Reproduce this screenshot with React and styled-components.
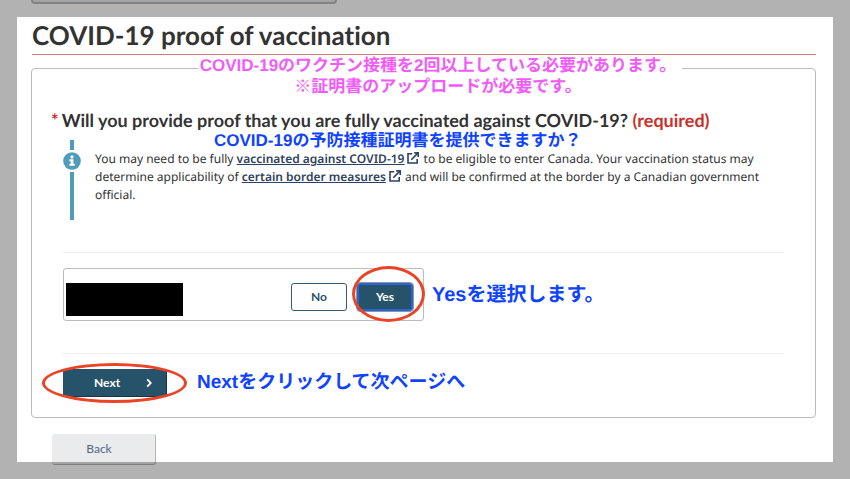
import React from "react";
import styled, { createGlobalStyle, css } from "styled-components";

export default function App() {
  return (
    <Page>
      <GlobalStyle />
      <PreviousPanel />
      <Title>COVID-19 proof of vaccination</Title>

      <Panel>
        <TopNote>
          COVID-19のワクチン接種を2回以上している必要があります。
          <br />
          ※証明書のアップロードが必要です。
        </TopNote>

        <Question id="question">
          <Star>*</Star>
          Will you provide proof that you are fully vaccinated against COVID-19?{" "}
          <Required>(required)</Required>
          <QuestionNote>
            COVID-19の予防接種証明書を提供できますか？
          </QuestionNote>
        </Question>

        <Callout>
          <Rail>
            <RailBar $size="10px" />
            <InfoIcon />
            <RailBar />
          </Rail>
          <CalloutText>
            You may need to be fully{" "}
            <Link href="#vaccinated">vaccinated against COVID-19</Link>
            <ExternalIcon /> to be eligible to enter Canada. Your vaccination
            status may determine applicability of{" "}
            <Link href="#measures">certain border measures</Link>
            <ExternalIcon /> and will be confirmed at the border by a Canadian
            government official.
          </CalloutText>
        </Callout>

        <Divider />

        <Row>
          <Traveller role="group" aria-labelledby="question">
            <HiddenName />
            <ChoiceButton type="button">No</ChoiceButton>
            <Marked>
              <ChoiceButton type="button" $selected aria-pressed="true">
                Yes
              </ChoiceButton>
              <Ring $x="-5px" $y="-17px" $bottom="-11px" $right="-12px" />
            </Marked>
          </Traveller>
          <Note $size="20px">Yesを選択します。</Note>
        </Row>

        <Divider />

        <Row>
          <Marked>
            <NextButton type="button">
              Next
              <Chevron />
            </NextButton>
            <Ring $x="-21px" $y="-6px" $bottom="-6px" $right="-20px" />
          </Marked>
          <Note $size="19px" $gap="30px">
            Nextをクリックして次ページへ
          </Note>
        </Row>
      </Panel>

      <BackButton type="button">Back</BackButton>
      <Spotlight />
    </Page>
  );
}

const InfoIcon = () => (
  <InfoSvg viewBox="0 0 18 18" aria-hidden="true">
    <circle cx="9" cy="9" r="8.8" fill="#4d9cb9" />
    <circle cx="9" cy="4.9" r="1.6" fill="#fff" />
    <path
      d="M6.4 7.3h4v4.5h1.3v2H6.4v-2h1.3V9.3H6.4z"
      fill="#fff"
    />
  </InfoSvg>
);

const ExternalIcon = () => (
  <ExternalSvg viewBox="0 0 12 12" aria-hidden="true">
    <path d="M5.2 1.8H1v9.2h9.2V7" />
    <path d="M4.3 7.8L10.6 1.4" />
    <path d="M7.2.9h4v4" />
  </ExternalSvg>
);

const Chevron = () => (
  <ChevronSvg viewBox="0 0 6 10" aria-hidden="true">
    <path d="M1.2 1.4L4.8 5L1.2 8.6" />
  </ChevronSvg>
);

const GlobalStyle = createGlobalStyle`
  * {
    box-sizing: border-box;
  }

  body {
    margin: 0;
    background: #fff;
    color: #333;
    font-family: "Noto Sans", sans-serif;
    font-variant-ligatures: none;
    text-rendering: geometricPrecision;
  }
`;

const Page = styled.main`
  display: flex;
  flex-direction: column;
  padding: 0 34px 14px 31px;
`;

const PreviousPanel = styled.div`
  width: 39%;
  height: 4px;
  background: #eaebed;
  border: 2px solid #bbb;
  border-top: 0;
  border-radius: 0 0 4px 4px;
`;

const Title = styled.h1`
  margin: 13px 0 0 1px;
  padding-bottom: 1px;
  border-bottom: 1px solid #d0797d;
  font-family: Lato, sans-serif;
  font-size: 26px;
  font-weight: bold;
  line-height: 36px;
`;

const Panel = styled.section`
  position: relative;
  margin-top: 13px;
  padding: 39px 31px 20px;
  border: 1px solid #bbb;
  border-radius: 4px;
`;

const noteText = css`
  font-family: "Liberation Sans", "Noto Sans CJK JP", sans-serif;
  font-weight: bold;
  white-space: nowrap;
`;

const TopNote = styled.p`
  ${noteText}
  position: absolute;
  top: -14px;
  left: 166px;
  width: 484px;
  margin: 0;
  padding-right: 4px;
  background: rgba(255, 255, 255, 0.96);
  color: #f05cf8;
  font-size: 17px;
  line-height: 21px;
  text-align: center;
`;

const Question = styled.h2`
  position: relative;
  margin: 0 0 0 -12px;
  font-family: Lato, sans-serif;
  font-size: 18px;
  font-weight: bold;
  line-height: 24px;
`;

const Star = styled.span`
  margin-right: 3px;
  color: #c9302c;
`;

const Required = styled.span`
  color: #c9302c;
`;

const QuestionNote = styled.span`
  ${noteText}
  position: absolute;
  top: 22px;
  left: 163px;
  color: #0f43ff;
  font-size: 17px;
  line-height: 22px;
`;

const Callout = styled.div`
  display: flex;
  gap: 14px;
  margin-top: 8px;
  min-height: 80px;
`;

const Rail = styled.div`
  display: flex;
  flex-direction: column;
  align-items: center;
  gap: 2px;
  width: 18px;
`;

const RailBar = styled.span`
  width: 4px;
  height: ${(p) => p.$size || "auto"};
  flex: ${(p) => (p.$size ? "none" : 1)};
  background: #4d9cb9;
`;

const InfoSvg = styled.svg`
  width: 18px;
  height: 18px;
`;

const CalloutText = styled.p`
  flex: 1;
  margin: 0;
  padding: 10px 16px 0 0;
  font-size: 12px;
  line-height: 18px;
`;

const Link = styled.a`
  color: #2f4260;
  font-weight: 600;
`;

const ExternalSvg = styled.svg`
  width: 12px;
  height: 12px;
  margin: 0 1px 0 3px;
  vertical-align: -1px;
  fill: none;
  stroke: #2f4260;
  stroke-width: 1.6;
`;

const Divider = styled.hr`
  width: 100%;
  margin: 32px 0 15px;
  border: 0;
  border-top: 1px solid #eee;
`;

const Row = styled.div`
  display: flex;
  align-items: center;
`;

const Traveller = styled.div`
  display: flex;
  align-items: flex-start;
  gap: 10px;
  width: 361px;
  height: 53px;
  padding: 14px 10px 0 2px;
  border: 1px solid #bbb;
  border-radius: 3px;
`;

const HiddenName = styled.div`
  width: 117px;
  height: 33px;
  margin-right: auto;
  background: #000;
`;

const Marked = styled.div`
  position: relative;
  display: flex;
`;

const Ring = styled.span`
  position: absolute;
  top: ${(p) => p.$y};
  right: ${(p) => p.$right};
  bottom: ${(p) => p.$bottom};
  left: ${(p) => p.$x};
  border: 3px solid #ea4326;
  border-radius: 50%;
  pointer-events: none;
`;

const ChoiceButton = styled.button`
  width: 56px;
  height: 28px;
  padding: 0;
  border: 1px solid #335b70;
  border-radius: 3px;
  background: #fff;
  color: #26536a;
  font: bold 12px/16px Lato, sans-serif;

  ${(p) =>
    p.$selected &&
    css`
      border: 2px solid #2a62d8;
      outline: 1px solid #8a99a3;
      background: #26536a;
      color: #fff;
    `}
`;

const NextButton = styled.button`
  display: flex;
  align-items: center;
  justify-content: space-between;
  width: 104px;
  height: 28px;
  padding: 0 14px 0 31px;
  border: 0;
  border-right: 1px solid #183542;
  border-bottom: 1px solid #183542;
  background: #26536a;
  color: #fff;
  font: bold 12px/16px Lato, sans-serif;
`;

const ChevronSvg = styled.svg`
  width: 6px;
  height: 10px;
  fill: none;
  stroke: #fff;
  stroke-width: 1.8;
`;

const Note = styled.p`
  ${noteText}
  margin: 0 0 0 ${(p) => p.$gap || "8px"};
  color: #0f43ff;
  font-size: ${(p) => p.$size};
  line-height: 24px;
`;

const BackButton = styled.button`
  width: 104px;
  height: 31px;
  margin: 16px 0 0 21px;
  padding: 0 9px 0 0;
  border: 0;
  border-right: 1px solid #b5b6b8;
  border-bottom: 1px solid #b5b6b8;
  border-radius: 3px;
  background: #eaebed;
  color: #52658a;
  font: 12px/16px Lato, sans-serif;
`;

// dims the edges of the window and leaves the middle clear
const Spotlight = styled.div`
  position: fixed;
  inset: 0;
  border: 17px solid rgba(0, 0, 0, 0.3);
  pointer-events: none;
`;
